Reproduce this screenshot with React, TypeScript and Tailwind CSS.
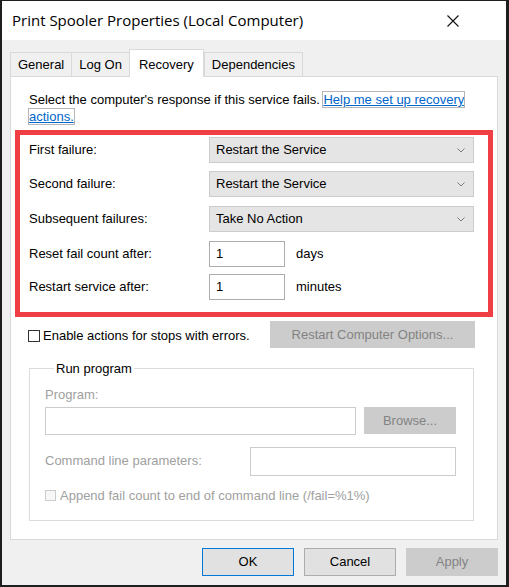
import React from 'react';

const Chevron = () => (
  <svg width="8" height="5" viewBox="0 0 8 5" className="shrink-0">
    <path d="M0.5 0.5 L4 4 L7.5 0.5" fill="none" stroke="#7a7a7a" strokeWidth="1" />
  </svg>
);

const Dropdown = ({ value }: { value: string }) => (
  <div className="flex h-[26px] w-[265px] items-center justify-between border border-[#cccccc] bg-[#e5e5e5] pl-[6px] pr-[8px]">
    <span>{value}</span>
    <Chevron />
  </div>
);

const NumberBox = ({ value }: { value: string }) => (
  <div className="flex h-[26px] w-[76px] items-center border border-[#adadad] bg-white pl-[6px]">{value}</div>
);

const tabs = ['General', 'Log On', 'Recovery', 'Dependencies'];

export default function App() {
  return (
    <div
      className="flex h-[587px] w-[509px] flex-col border-b-2 border-l-2 border-r-[3px] border-t border-[#1e1e1e] bg-[#f0f0f0] text-[13px] text-black"
      style={{ fontFamily: '"Liberation Sans", Arial, sans-serif' }}
    >
      {/* title bar */}
      <div className="flex h-[39px] items-center justify-between bg-white pl-[10px] pr-[47px]">
        <span className="text-[15px]" style={{ fontFamily: '"Open Sans", "Noto Sans", sans-serif' }}>
          Print Spooler Properties (Local Computer)
        </span>
        <svg width="12" height="12" viewBox="0 0 12 12">
          <path d="M0.5 0.5 L11.5 11.5 M11.5 0.5 L0.5 11.5" stroke="#111" strokeWidth="1.1" />
        </svg>
      </div>

      <div className="flex flex-1 flex-col pl-[8px] pr-[8px]">
        {/* tabs */}
        <div className="mt-[9px] flex h-[27px] items-end">
          {tabs.map((t) => {
            const on = t === 'Recovery';
            return (
              <div
                key={t}
                className={
                  on
                    ? 'relative z-10 -mb-px flex h-[28px] items-start border border-b-0 border-[#d9d9d9] bg-white px-[9px] pt-[5px]'
                    : 'flex h-[24px] items-center border border-b-0 border-r-0 border-[#d9d9d9] px-[7px] last:border-r'
                }
              >
                {t}
              </div>
            );
          })}
        </div>

        {/* panel */}
        <div className="flex h-[464px] flex-col border border-[#d9d9d9] bg-white px-[4px] pt-[14px]">
          <p className="pl-[14px] pr-[10px] leading-[17px]">
            Select the computer's response if this service fails.{' '}
            <span className="text-[#0066cc] underline outline-1 outline-[#b5b5b5]">
              Help me set up recovery actions.
            </span>
          </p>

          <div className="mt-[5px] border-[5px] border-[#f03e45] pb-[12px] pl-[9px] pt-[2px]">
            {[
              ['First failure:', 'Restart the Service'],
              ['Second failure:', 'Restart the Service'],
              ['Subsequent failures:', 'Take No Action'],
            ].map(([l, v], i) => (
              <div key={l} className={`flex items-center ${i === 0 ? '' : i === 1 ? 'mt-[8px]' : 'mt-[9px]'}`}>
                <span className="w-[180px]">{l}</span>
                <Dropdown value={v} />
              </div>
            ))}
            <div className="mt-[9px] flex items-center">
              <span className="w-[180px]">Reset fail count after:</span>
              <NumberBox value="1" />
              <span className="ml-[11px]">days</span>
            </div>
            <div className="mt-[7px] flex items-center">
              <span className="w-[180px]">Restart service after:</span>
              <NumberBox value="1" />
              <span className="ml-[11px]">minutes</span>
            </div>
          </div>

          <div className="mt-[4px] flex items-start">
            <div className="mt-[5px] ml-[13px] flex items-center">
              <span className="h-[12px] w-[12px] border border-[#333]" />
              <span className="ml-[3px]">Enable actions for stops with errors.</span>
            </div>
            <div className="ml-auto mr-[18px] flex h-[27px] w-[205px] items-center justify-center bg-[#cccccc] text-[#838383]">
              Restart Computer Options...
            </div>
          </div>

          <fieldset className="ml-[14px] mr-[19px] mt-[12px] h-[161px] border border-[#dcdcdc] pl-[15px] pr-[17px]">
            <legend className="ml-[9px] px-[2px] leading-[17px]">Run program</legend>
            <div className="mt-[8px] text-[#a0a0a0]">Program:</div>
            <div className="mt-[2px] flex items-center">
              <div className="h-[28px] w-[311px] border border-[#cccccc] bg-white" />
              <div className="ml-auto flex h-[27px] w-[92px] items-center justify-center bg-[#cccccc] text-[#838383]">
                Browse...
              </div>
            </div>
            <div className="mt-[12px] flex items-center">
              <span className="text-[#a0a0a0]">Command line parameters:</span>
              <div className="ml-auto h-[29px] w-[206px] border border-[#cccccc] bg-white" />
            </div>
            <div className="mt-[10px] flex items-center">
              <span className="h-[11px] w-[11px] border border-[#cccccc] bg-[#f7f7f7]" />
              <span className="ml-[4px] text-[#a0a0a0]">Append fail count to end of command line (/fail=%1%)</span>
            </div>
          </fieldset>
        </div>

        {/* buttons */}
        <div className="mt-[8px] flex justify-end gap-[10px]">
          <div className="flex h-[28px] w-[92px] items-center justify-center border border-[#0078d7] bg-[#e1e1e1]">OK</div>
          <div className="flex h-[28px] w-[92px] items-center justify-center border border-[#adadad] bg-[#e1e1e1]">Cancel</div>
          <div className="flex h-[28px] w-[92px] items-center justify-center bg-[#cccccc] text-[#838383]">Apply</div>
        </div>
      </div>
    </div>
  );
}
